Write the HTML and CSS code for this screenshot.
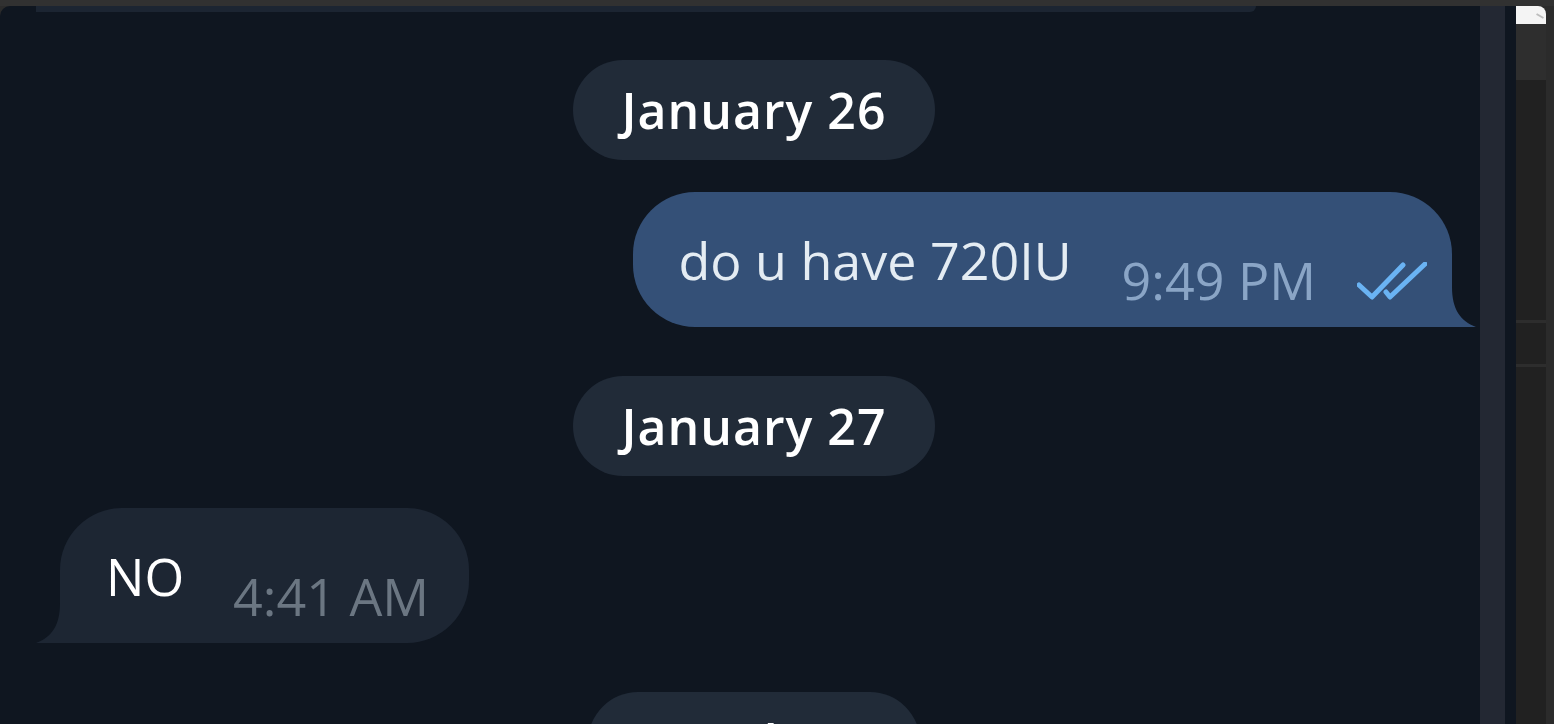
FILE: index.html
```html
<!DOCTYPE html>
<html lang="en">
<head>
  <meta charset="UTF-8">
  <meta name="viewport" content="width=device-width, initial-scale=1.0">
  <title>Chat</title>
  <link rel="stylesheet" href="styles.css">
</head>
<body>
  <div class="topbar"></div>
  <div class="main">
    <section class="chat">
      <div class="prev-bubble"></div>

      <div class="day"><span>January 26</span></div>

      <div class="row out">
        <div class="bubble out">
          <span class="text">do u have 720IU</span>
          <span class="meta">9:49 PM
            <svg class="checks" viewBox="0 0 70 38" width="70" height="38">
              <path d="M2 23 L15 35 L46 3" />
              <path d="M29 30 L33 35 L68 2" />
            </svg>
          </span>
          <svg class="tail" viewBox="0 0 24 40" width="24" height="40"><path d="M0 0 C0 22 8 34 24 40 L0 40 Z" /></svg>
        </div>
      </div>

      <div class="day"><span>January 27</span></div>

      <div class="row in">
        <div class="bubble in">
          <span class="text">NO</span>
          <span class="meta">4:41 AM</span>
          <svg class="tail" viewBox="0 0 24 40" width="24" height="40"><path d="M24 0 C24 22 16 34 0 40 L24 40 Z" /></svg>
        </div>
      </div>

      <div class="day last"><span>March 25</span></div>

      <div class="scrollbar"></div>
    </section>
    <aside class="side">
      <div class="side-cap"><span class="side-mark"></span></div>
      <div class="side-head"></div>
      <div class="side-body">
        <div class="side-line"></div>
        <div class="side-line"></div>
      </div>
    </aside>
  </div>
</body>
</html>
```

FILE: styles.css
```css
/* Ciemny motyw czatu */
body {
  margin: 0;
  background: #2b2b2b;
  font-family: "Open Sans", "Noto Sans", sans-serif;
  height: 724px;
  overflow: hidden;
}
.topbar {
  height: 6px;
  background: #313131;
}
.main {
  display: flex;
  height: 718px;
}
.chat {
  position: relative;
  width: 1516px;
  flex: 0 0 1516px;
  background: #0f1620;
  border-top-left-radius: 10px;
  overflow: hidden;
  display: flex;
  flex-direction: column;
}
.chat > * {
  flex-shrink: 0;
}
.prev-bubble {
  height: 6px;
  width: 1220px;
  margin-left: 36px;
  background: #1c2532;
  border-bottom-right-radius: 30px;
}
.day {
  display: flex;
  justify-content: center;
  padding-right: 8px;
  margin-top: 48px;
}
.day span {
  display: inline-block;
  height: 100px;
  line-height: 100px;
  padding: 0 48px;
  border-radius: 50px;
  background: #212b38;
  color: #fff;
  font-size: 50px;
  font-weight: 600;
  letter-spacing: 1px;
}
.day.last span {
  letter-spacing: 2px;
  padding: 0 46px;
}
.row {
  display: flex;
  margin-top: 32px;
}
.row.out {
  justify-content: flex-end;
  padding-right: 64px;
}
.row.in {
  padding-left: 60px;
}
.row + .day {
  margin-top: 49px;
}
.bubble {
  position: relative;
  display: flex;
  align-items: flex-start;
  padding: 33px 25px 12px 45px;
}
.bubble.out {
  background: #345077;
  border-radius: 62px 62px 0 62px;
  color: #e4ecf3;
}
.bubble.in {
  background: #1d2633;
  border-radius: 62px 62px 62px 0;
  color: #fff;
  padding: 33px 40px 12px 46px;
}
.text {
  font-size: 52px;
  line-height: 70px;
}
.meta {
  display: flex;
  align-items: center;
  margin-top: 20px;
  margin-left: 50px;
  font-size: 52px;
  line-height: 70px;
  color: #8aa5c6;
}
.bubble.in .text {
  font-size: 51px;
}
.bubble.in .meta {
  color: #6b7682;
  margin-left: 49px;
}
.checks {
  margin-left: 41px;
  margin-top: 2px;
  fill: none;
  stroke: #6ab3f3;
  stroke-width: 5;
  stroke-linecap: round;
  stroke-linejoin: round;
}
.tail {
  position: absolute;
  bottom: 0;
}
.bubble.out .tail {
  right: -24px;
  fill: #345077;
}
.bubble.in .tail {
  left: -24px;
  fill: #1d2633;
}
.scrollbar {
  position: absolute;
  top: 0;
  bottom: 0;
  left: 1480px;
  width: 25px;
  background: #232833;
}
.side {
  width: 30px;
  display: flex;
  flex-direction: column;
}
.side-cap {
  position: relative;
  height: 18px;
  background: #f4f4f4;
  border-top-right-radius: 8px;
}
.side-mark {
  position: absolute;
  right: 2px;
  top: 9px;
  width: 8px;
  height: 2px;
  background: #bdbdbd;
  transform: rotate(30deg);
}
.side-head {
  height: 56px;
  background: #2e2e2e;
}
.side-body {
  flex: 1;
  background: #212121;
  padding-top: 240px;
}
.side-line {
  height: 3px;
  background: #2d2d2d;
  margin-bottom: 41px;
}
```
